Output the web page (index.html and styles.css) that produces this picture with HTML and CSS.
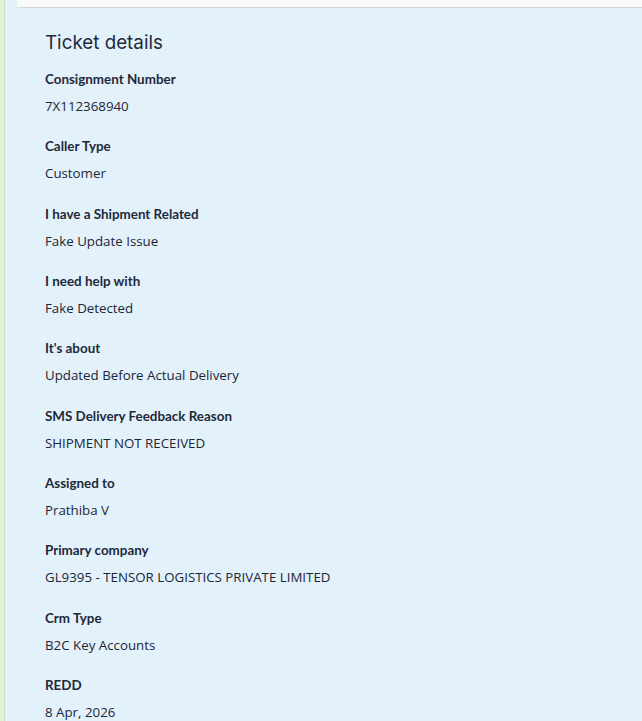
FILE: index.html
```html
<!DOCTYPE html>
<html>
<head>
<meta charset="utf-8">
<link rel="stylesheet" href="styles.css">
</head>
<body>
<div class="page">
  <div class="side"></div>
  <div class="main">
    <div class="topbar"></div>
    <section class="details">
      <h2 class="title">Ticket details</h2>
      <div class="field"><div class="label">Consignment Number</div><div class="value">7X112368940</div></div>
      <div class="field"><div class="label">Caller Type</div><div class="value">Customer</div></div>
      <div class="field"><div class="label">I have a Shipment Related</div><div class="value">Fake Update Issue</div></div>
      <div class="field"><div class="label">I need help with</div><div class="value">Fake Detected</div></div>
      <div class="field"><div class="label">It's about</div><div class="value">Updated Before Actual Delivery</div></div>
      <div class="field"><div class="label">SMS Delivery Feedback Reason</div><div class="value">SHIPMENT NOT RECEIVED</div></div>
      <div class="field"><div class="label">Assigned to</div><div class="value">Prathiba V</div></div>
      <div class="field"><div class="label">Primary company</div><div class="value">GL9395 - TENSOR LOGISTICS PRIVATE LIMITED</div></div>
      <div class="field"><div class="label">Crm Type</div><div class="value">B2C Key Accounts</div></div>
      <div class="field"><div class="label">REDD</div><div class="value">8 Apr, 2026</div></div>
    </section>
  </div>
</div>
</body>
</html>
```

FILE: styles.css
```css
html, body {
  margin: 0;
  padding: 0;
  height: 100%;
  overflow: hidden;
}
body {
  background: #e3f1fb;
  color: #1e2a3a;
}
.page {
  display: flex;
  min-height: 721px;
}
.side {
  width: 4px;
  flex: 0 0 4px;
  background: #e2f0d9;
  border-right: 1px solid #c9e2bd;
}
.main {
  flex: 1;
  background: #e3f1fb;
}
.topbar {
  margin-left: 12px;
  height: 7px;
  background: #fafafa;
  border-bottom: 1px solid #d6d9dc;
}
.details {
  padding-left: 40px;
  padding-top: 23px;
}
.title {
  margin: 0 0 14px 0;
  font-family: "Inter", "Open Sans", sans-serif;
  font-weight: 400;
  font-size: 18.8px;
  line-height: 24px;
  color: #1e2a3a;
}
.field {
  margin-bottom: 20.35px;
}
.label {
  font-family: "Lato", "Open Sans", sans-serif;
  font-weight: 700;
  font-size: 13.4px;
  line-height: 20px;
  color: #1e2a3a;
}
.value {
  margin-top: 7px;
  font-family: "Open Sans", "Inter", sans-serif;
  font-weight: 400;
  font-size: 13.3px;
  line-height: 20px;
  color: #1b2636;
}
```
